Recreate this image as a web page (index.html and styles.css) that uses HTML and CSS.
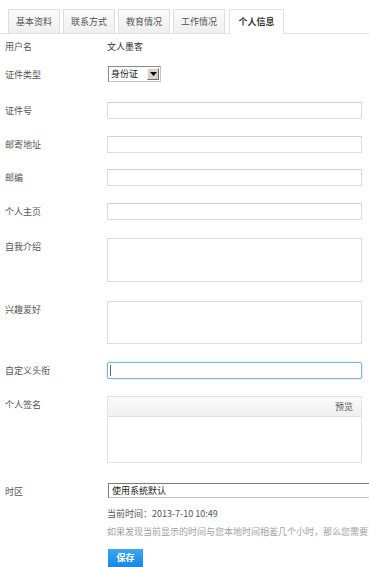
FILE: index.html
```html
<!DOCTYPE html>
<html lang="zh-CN">
<head>
<meta charset="utf-8">
<title>个人信息</title>
<link rel="stylesheet" href="styles.css">
</head>
<body>
<div class="page">
  <ul class="tabs">
    <li class="tab">基本资料</li>
    <li class="tab">联系方式</li>
    <li class="tab">教育情况</li>
    <li class="tab">工作情况</li>
    <li class="tab tab-active">个人信息</li>
  </ul>

  <form class="form">
    <div class="row row-first">
      <span class="label">用户名</span>
      <span class="value">文人墨客</span>
    </div>
    <div class="row row-id">
      <span class="label">证件类型</span>
      <div class="mini-select">
        <span class="mini-select-text">身份证</span>
        <span class="mini-select-btn"><svg width="7" height="4" viewBox="0 0 7 4"><path d="M0 0h7L3.5 4z" fill="#000"/></svg></span>
      </div>
    </div>
    <div class="row row-s19">
      <span class="label">证件号</span>
      <input class="input" type="text">
    </div>
    <div class="row">
      <span class="label">邮寄地址</span>
      <input class="input" type="text">
    </div>
    <div class="row row-s16">
      <span class="label">邮编</span>
      <input class="input" type="text">
    </div>
    <div class="row">
      <span class="label">个人主页</span>
      <input class="input" type="text">
    </div>
    <div class="row row-s18">
      <span class="label">自我介绍</span>
      <textarea class="area area-a"></textarea>
    </div>
    <div class="row row-s19">
      <span class="label">兴趣爱好</span>
      <textarea class="area area-b"></textarea>
    </div>
    <div class="row row-s18">
      <span class="label">自定义头衔</span>
      <div class="focus-wrap">
        <input class="input input-focus" type="text">
        <span class="caret"></span>
      </div>
    </div>
    <div class="row">
      <span class="label">个人签名</span>
      <div class="editor">
        <div class="editor-bar">预览</div>
        <div class="editor-body"></div>
      </div>
    </div>
    <div class="row row-s20">
      <span class="label">时区</span>
      <div class="tz-wrap">
        <div class="tz-select">使用系统默认</div>
        <p class="now">当前时间：2013-7-10 10:49</p>
        <p class="hint">如果发现当前显示的时间与您本地时间相差几个小时，那么您需要更改自己的时区设置</p>
        <button class="save" type="button">保存</button>
      </div>
    </div>
  </form>
</div>
</body>
</html>
```

FILE: styles.css
```css
* {
  box-sizing: border-box;
}

html, body {
  margin: 0;
  padding: 0;
  background: #fff;
  overflow: hidden;
}

body {
  font-family: "Noto Sans CJK SC", "Liberation Sans", sans-serif;
  font-size: 9px;
  color: #555;
}

.page {
  width: 369px;
  height: 567px;
  overflow: hidden;
}

.tabs {
  list-style: none;
  margin: 0;
  padding: 9px 0 0 8px;
  display: flex;
  align-items: flex-end;
  gap: 3px;
  border-bottom: 1px solid #e3e3e3;
  height: 34px;
}

.tab {
  height: 24px;
  width: 52px;
  line-height: 23px;
  text-align: center;
  color: #555;
  background: linear-gradient(#fbfbfb, #efefef);
  border: 1px solid #dcdcdc;
  border-bottom: none;
}

.tab-active {
  width: 55px;
  margin-left: 1px;
  margin-bottom: -1px;
  height: 25px;
  background: #fff;
  color: #333;
  font-weight: bold;
  border-color: #e3e3e3;
}

.form {
  margin: 0;
  padding: 0 7px 0 5px;
  display: flex;
  flex-direction: column;
}

.row {
  display: grid;
  grid-template-columns: 102px 255px;
  align-items: start;
  margin-top: 17px;
}

.row-first {
  margin-top: 4px;
}

.row-id {
  margin-top: 11px;
}

.row-s16 { margin-top: 16px; }
.row-s18 { margin-top: 18px; }
.row-s19 { margin-top: 19px; }
.row-s20 { margin-top: 20px; }

.label {
  line-height: 17px;
  color: #555;
  white-space: nowrap;
}

.value {
  line-height: 17px;
  color: #333;
}

.mini-select {
  display: flex;
  align-items: center;
  width: 53px;
  height: 16px;
  margin-left: 1px;
  border: 1px solid #8a8a8a;
  border-right-color: #c8c8c8;
  border-bottom-color: #c8c8c8;
  background: #fff;
  padding: 0 1px 0 2px;
}

.mini-select-text {
  flex: 1;
  color: #222;
  line-height: 14px;
}

.mini-select-btn {
  width: 12px;
  height: 12px;
  display: flex;
  align-items: center;
  justify-content: center;
  background: #d6d3ce;
  border: 1px solid;
  border-color: #f4f4f4 #6e6e6e #6e6e6e #f4f4f4;
}

.input {
  display: block;
  width: 255px;
  height: 17px;
  margin: 0;
  padding: 0 3px;
  border: 1px solid #dcdcdc;
  border-top-color: #d2d2d2;
  background: #fff;
  font: inherit;
  outline: none;
}

.area {
  display: block;
  width: 255px;
  margin: 0;
  padding: 2px;
  border: 1px solid #dcdcdc;
  background: #fff;
  resize: none;
  font: inherit;
  outline: none;
}

.area-a { height: 44px; }
.area-b { height: 43px; }

.focus-wrap {
  position: relative;
  width: 255px;
}

.input-focus {
  border: 1px solid #7ab6de;
  border-radius: 2px;
  box-shadow: 0 0 2px rgba(90, 160, 215, 0.5);
}

.caret {
  position: absolute;
  left: 3px;
  top: 3px;
  width: 1px;
  height: 11px;
  background: #666;
}

.editor {
  width: 255px;
  height: 67px;
  border: 1px solid #e2e2e2;
  display: flex;
  flex-direction: column;
}

.editor-bar {
  height: 20px;
  line-height: 19px;
  text-align: right;
  padding-right: 8px;
  color: #555;
  background: linear-gradient(#fafafa, #f0f0f0);
  border-bottom: 1px solid #e0e0e0;
}

.editor-body {
  flex: 1;
  background: #fff;
}

.tz-wrap {
  display: flex;
  flex-direction: column;
  align-items: flex-start;
}

.tz-select {
  width: 300px;
  height: 15px;
  margin-left: 1px;
  line-height: 13px;
  padding-left: 3px;
  color: #222;
  border: 1px solid #7a7a7a;
  border-right-color: #c8c8c8;
  border-bottom-color: #c8c8c8;
  background: #fff;
}

.now {
  margin: 7px 0 0;
  line-height: 17px;
  color: #555;
  white-space: nowrap;
}

.hint {
  margin: 1px 0 0;
  line-height: 17px;
  color: #a0a0a0;
  white-space: nowrap;
}

.save {
  margin: 9px 0 0 1px;
  width: 35px;
  height: 18px;
  padding: 0;
  border: none;
  background: linear-gradient(#3aa6f4, #1687e8);
  color: #fff;
  font: inherit;
  font-weight: bold;
  line-height: 18px;
}
```
